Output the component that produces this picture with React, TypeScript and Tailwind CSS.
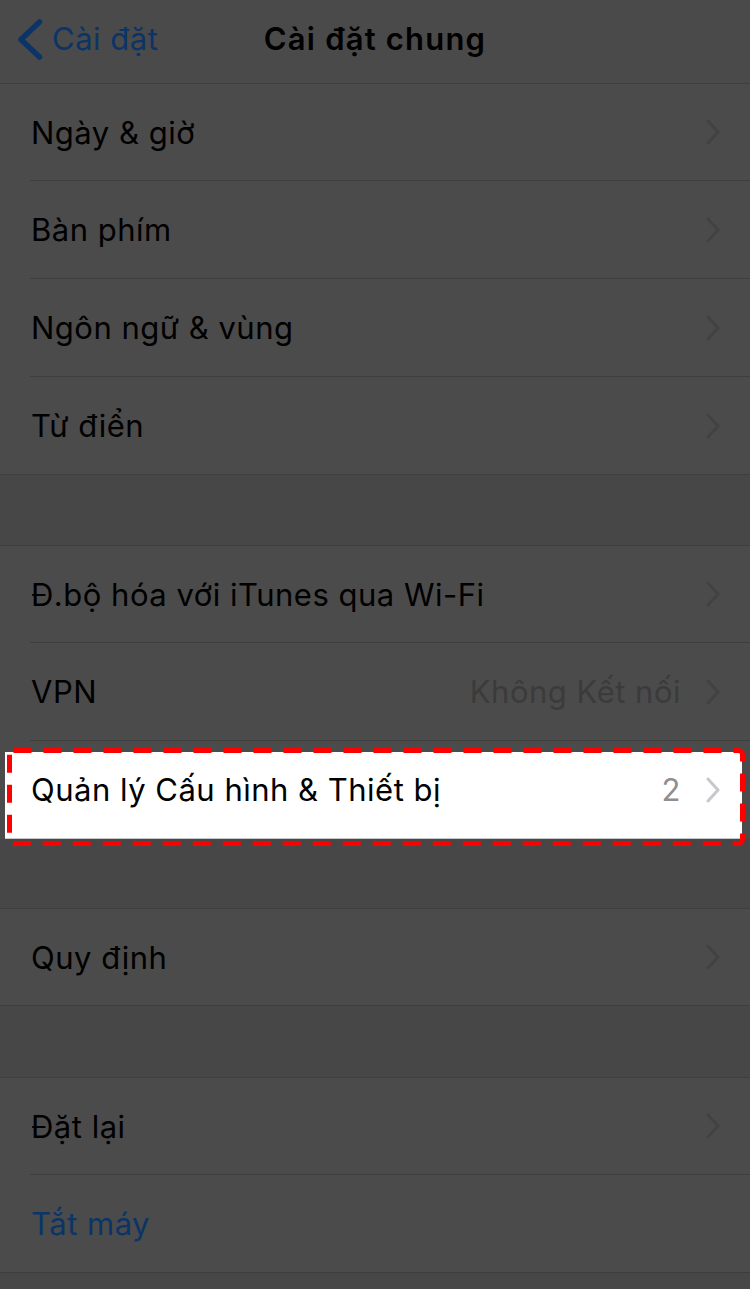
import React from "react";

const BLUE = "#0b3467";

const Chevron = ({ color }: { color: string }) => (
  <svg width="16" height="26" viewBox="0 0 16 26" className="shrink-0">
    <path d="M3 2 L13 13 L3 24" fill="none" stroke={color} strokeWidth="3" strokeLinecap="round" strokeLinejoin="round" />
  </svg>
);

const Row = ({
  label,
  detail,
  sep,
  blue,
  noChevron,
  h,
}: {
  label: string;
  detail?: string;
  sep?: boolean;
  blue?: boolean;
  noChevron?: boolean;
  h: string;
}) => (
  <div className={`${h} pl-[30px]`}>
    <div className={`h-full flex items-center pr-[29px] ${sep ? "border-b border-[#3e3e3e]" : ""}`}>
      <span className={`flex-1 pl-[1px] ${blue ? "text-[#0b3467]" : "text-black"}`}>{label}</span>
      {detail && <span className="text-[#3b3b3b] mr-[24px]">{detail}</span>}
      {!noChevron && <Chevron color="#424242" />}
    </div>
  </div>
);

export default function App() {
  return (
    <div
      className="relative w-[750px] h-[1289px] overflow-hidden bg-[#474747] text-[31px] leading-none tracking-[0.5px]"
      style={{ fontFamily: "Inter, 'Noto Sans', sans-serif" }}
    >
      {/* Nav bar */}
      <div className="h-[84px] bg-[#4a4a4a] border-b border-[#3e3e3e] grid grid-cols-[1fr_auto_1fr] items-center pb-[6px]">
        <div className="flex items-center pl-[17px] gap-[9px]" style={{ color: BLUE }}>
          <svg width="26" height="44" viewBox="0 0 26 44" className="mt-[2px]">
            <path d="M22.5 4 L4 21.5 L22.5 39" fill="none" stroke={BLUE} strokeWidth="5.5" strokeLinecap="round" strokeLinejoin="round" />
          </svg>
          <span>Cài đặt</span>
        </div>
        <div className="font-semibold text-black tracking-[1.2px]">Cài đặt chung</div>
        <div />
      </div>

      <div className="bg-[#4b4b4b] border-b border-[#3e3e3e]">
        <Row h="h-[97px]" label="Ngày & giờ" sep />
        <Row h="h-[98px]" label="Bàn phím" sep />
        <Row h="h-[98px]" label="Ngôn ngữ & vùng" sep />
        <Row h="h-[97px]" label="Từ điển" />
      </div>

      <div className="h-[70px]" />

      <div className="bg-[#4b4b4b] border-t border-[#3e3e3e]">
        <Row h="h-[97px]" label="Đ.bộ hóa với iTunes qua Wi-Fi" sep />
        <Row h="h-[98px]" label="VPN" detail="Không Kết nối" sep />
        <div className="h-[98px] flex flex-col justify-end pl-[5px] pr-[8px]">
          <div className="h-[87px] bg-white border-b border-[#c8c7cc] flex items-center pb-[11px] pl-[26px] pr-[21px]">
            <span className="flex-1 text-black">Quản lý Cấu hình &amp; Thiết bị</span>
            <span className="text-[#8e8e93] mr-[24px]">2</span>
            <Chevron color="#c7c7cc" />
          </div>
        </div>
      </div>

      <div className="h-[69px]" />

      <div className="bg-[#4b4b4b] border-t border-b border-[#3e3e3e]">
        <Row h="h-[96px]" label="Quy định" />
      </div>

      <div className="h-[71px]" />

      <div className="bg-[#4b4b4b] border-t border-b border-[#3e3e3e]">
        <Row h="h-[97px]" label="Đặt lại" sep />
        <Row h="h-[97px]" label="Tắt máy" blue noChevron />
      </div>

      {/* Red dashed highlight annotation */}
      <svg className="absolute left-[7px] top-[748px]" width="738" height="98" viewBox="0 0 738 98">
        <rect x="2.5" y="2.5" width="733" height="93" rx="4" fill="none" stroke="#ff0000" strokeWidth="5" strokeDasharray="18 12" />
      </svg>
    </div>
  );
}
